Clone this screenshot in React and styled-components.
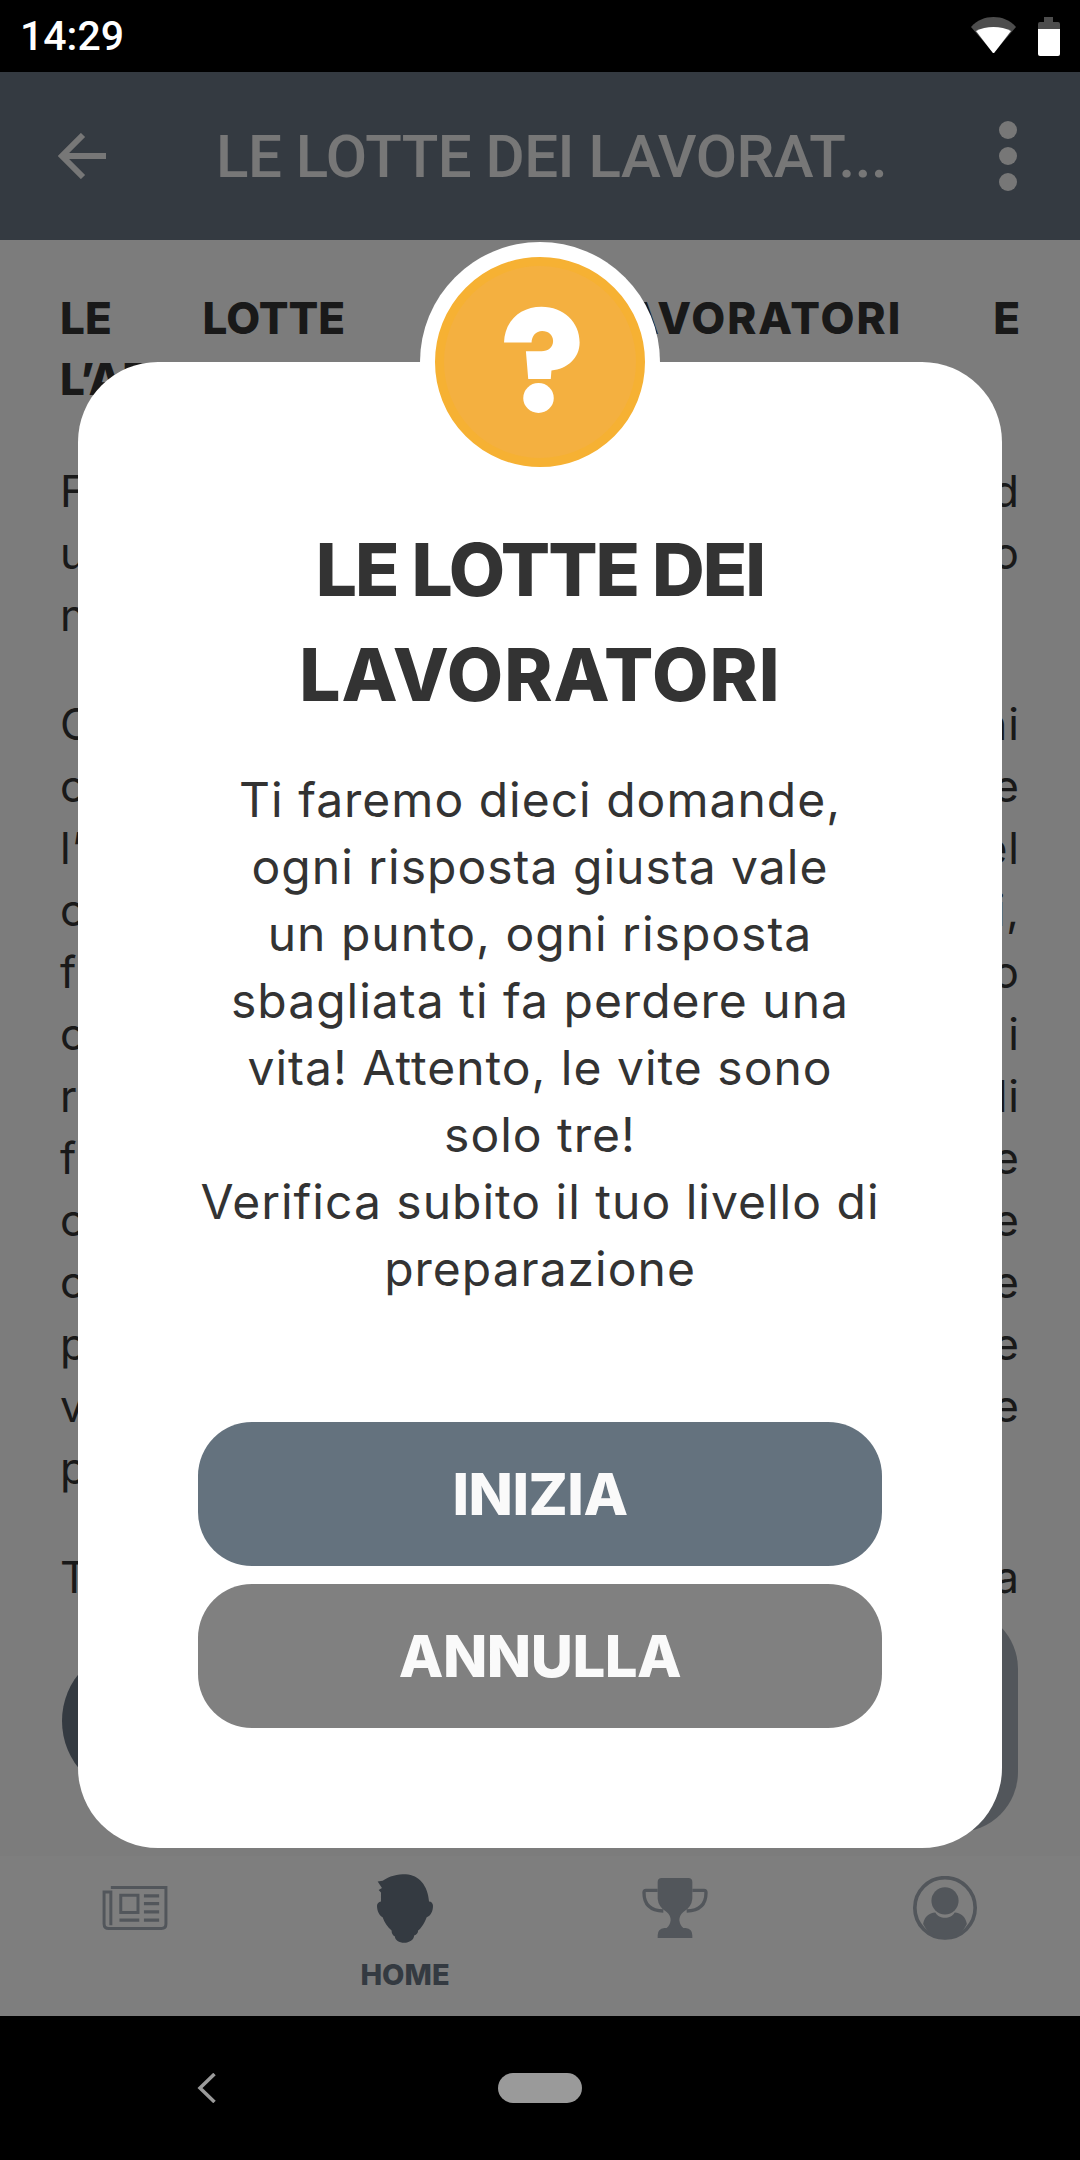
import React from 'react'
import styled, { createGlobalStyle } from 'styled-components'

const bodyLines = [
  ['F', 'd'], ['u', 'o'], ['n', ''],
]
const bodyLines2 = [
  ['C', 'ni'], ['c', 'e'], ['l’', 'el'], ['c', 'i,'], ['f', 'o'], ['c', 'i'], ['r', 'di'],
  ['f', 'e'], ['c', 'e'], ['c', 'e'], ['p', 'e'], ['v', 'e'], ['p', ''],
]

export default function App() {
  return (
    <Screen>
      <GlobalStyle />
      <StatusBar>
        <Clock>14:29</Clock>
        <StatusIcons>
          <svg width="45" height="36" viewBox="0 0 45 36">
            <path d="M0 10 C6 3 14 0 22.5 0 C31 0 39 3 45 10 L22.5 36 Z" fill="#4d4d4d" />
            <path d="M5 14 C10 11.500 16 10 22.500 10 C29 10 35 11.500 40 14 L23.500 35.500 Q22.500 36.500 21.500 35.500 Z" fill="#fff" />
          </svg>
          <svg width="22" height="39" viewBox="0 0 22 39">
            <path d="M6 0 H15 V5 H20 Q22 5 22 7 V12 H0 V7 Q0 5 2 5 H6 Z" fill="#4d4d4d" />
            <path d="M0 12 H22 V37 Q22 39 20 39 H2 Q0 39 0 37 Z" fill="#fff" />
          </svg>
        </StatusIcons>
      </StatusBar>

      <AppBar>
        <svg width="48" height="46" viewBox="0 0 48 46">
          <path d="M25 2 L4 23 L25 44 M4 23 H48" fill="none" stroke="#eee" strokeWidth="6" />
        </svg>
        <BarTitle>LE LOTTE DEI LAVORAT...</BarTitle>
        <Dots><i /><i /><i /></Dots>
      </AppBar>

      <Content>
        <Heading>LE LOTTE DEI <Wide>LAVORATORI</Wide> E L’AFFERMAZIONE</Heading>
        <Paragraph>
          {bodyLines.map((l, i) => <TextLine key={i}><span>{l[0]}</span><span>{l[1]}</span></TextLine>)}
        </Paragraph>
        <Paragraph>
          {bodyLines2.map((l, i) => <TextLine key={i}><span>{l[0]}</span><span>{l[1]}</span></TextLine>)}
        </Paragraph>
        <Paragraph $tight>
          <TextLine><span>T</span><span>a</span></TextLine>
        </Paragraph>
        <ActionRow>
          <RoundAction />
          <WideAction />
        </ActionRow>
      </Content>

      <TabBar>
        <Tab>
          <IconSlot>
            <svg width="66" height="44" viewBox="67 77 196 133">
              <path d="M92 81.500 H258.500 V192 Q258.500 205.500 245 205.500 H86 Q71.500 205.500 71.500 191 V95 H92 V196" fill="none" stroke="#a4acb6" strokeWidth="9" />
              <rect x="122" y="105" width="52" height="52" fill="none" stroke="#a4acb6" strokeWidth="9" />
              <path d="M192 107 H238 M192 130 H238 M192 155 H238 M192 180 H238 M118 180 H178" stroke="#a4acb6" strokeWidth="10" />
            </svg>
          </IconSlot>
        </Tab>
        <Tab>
          <IconSlot>
            <svg width="56" height="69" viewBox="888 40 169 207">
              <path d="M905 60 C925 45 950 40 975 40 C1015 42 1042 75 1045 122 C1052 122 1057 128 1057 135 C1057 152 1050 165 1038 170 C1030 190 1020 205 1012 210 C1012 218 1008 222 1000 225 C1000 238 985 247 970 247 C955 247 942 238 942 228 C935 225 932 218 932 210 C920 200 910 185 905 170 C895 165 888 150 888 135 C888 128 893 123 900 122 L900 95 L893 88 L903 82 L890 62 Z" fill="#687482" />
            </svg>
          </IconSlot>
          <TabLabel>HOME</TabLabel>
        </Tab>
        <Tab>
          <IconSlot>
            <svg width="66" height="60" viewBox="67 53 196 180">
              <path d="M125 53 H205 Q217 53 217 65 V115 Q215 140 190 155 Q178 165 178 180 Q180 195 190 203 H197 Q217 205 217 225 V233 H113 V225 Q113 205 133 203 H140 Q150 195 152 180 Q152 165 140 155 Q115 140 113 115 V65 Q113 53 125 53 Z" fill="#a4acb6" />
              <path d="M113 90 H78 Q72 90 72 97 Q72 150 130 152 M217 90 H252 Q258 90 258 97 Q258 150 200 152" fill="none" stroke="#a4acb6" strokeWidth="10" />
            </svg>
          </IconSlot>
        </Tab>
        <Tab>
          <IconSlot>
            <svg width="64" height="64" viewBox="878 47 192 193">
              <circle cx="974" cy="143" r="91" fill="none" stroke="#a4acb6" strokeWidth="11" />
              <circle cx="974" cy="122" r="41" fill="#a4acb6" />
              <path d="M908 192 C912 170 925 158 945 157 C955 178 993 178 1003 157 C1023 158 1036 170 1040 192 C1025 222 1000 238 974 238 C948 238 923 222 908 192 Z" fill="#a4acb6" />
            </svg>
          </IconSlot>
        </Tab>
      </TabBar>

      <SystemBar>
        <svg width="20" height="30" viewBox="0 0 20 30">
          <path d="M17.500 1 L3 15 L17.500 29" fill="none" stroke="#9a9a9a" strokeWidth="3.500" />
        </svg>
        <HomePill />
      </SystemBar>

      <Backdrop>
        <Modal>
          <Badge>
            <Disc>
              <svg width="192" height="192" viewBox="131 107 579 579">
                <path d="M312 338 C314 272 362 230 425 230 C492 230 540 276 540 338 C540 385 503 418 455 422 L453 448 H385 L378 364 H425 C445 364 460 352 460 333 C460 315 446 303 427 303 C408 303 396 318 395 338 Z" fill="#fff" />
                <ellipse cx="416" cy="505" rx="46" ry="45" fill="#fff" />
              </svg>
            </Disc>
          </Badge>
          <Title>
            <TitleLine $spacing={-2}>LE LOTTE DEI</TitleLine>
            <TitleLine $spacing={1}>LAVORATORI</TitleLine>
          </Title>
          <Message>
            Ti faremo dieci domande,<br />
            ogni risposta giusta vale<br />
            un punto, ogni risposta<br />
            sbagliata ti fa perdere una<br />
            vita! Attento, le vite sono<br />
            solo tre!<br />
            Verifica subito il tuo livello di<br />
            preparazione
          </Message>
          <Buttons>
            <Button $primary>INIZIA</Button>
            <Button>ANNULLA</Button>
          </Buttons>
        </Modal>
      </Backdrop>
    </Screen>
  )
}

const GlobalStyle = createGlobalStyle`
  html, body {
    margin: 0;
    padding: 0;
    background: #000;
  }
`;

const Screen = styled.div`
  position: relative;
  width: 1080px;
  height: 2160px;
  display: flex;
  flex-direction: column;
  overflow: hidden;
  font-family: "Inter", "Liberation Sans", sans-serif;
`;

const StatusBar = styled.div`
  height: 72px;
  background: #000;
  display: flex;
  justify-content: space-between;
  align-items: center;
  padding: 0 20px;
  flex-shrink: 0;
`;

const Clock = styled.div`
  font-family: "Roboto", sans-serif;
  font-weight: 500;
  font-size: 41px;
  color: #fff;
`;

const StatusIcons = styled.div`
  display: flex;
  align-items: flex-start;
  gap: 22px;
`;

const AppBar = styled.div`
  height: 168px;
  background: #687482;
  display: flex;
  align-items: center;
  padding: 0 63px 0 58px;
  flex-shrink: 0;
`;

const BarTitle = styled.div`
  flex: 1;
  margin-left: 110px;
  font-family: "Roboto", sans-serif;
  font-weight: 500;
  font-size: 60px;
  letter-spacing: -0.5px;
  color: #eee;
  white-space: nowrap;
`;

const Dots = styled.div`
  display: flex;
  flex-direction: column;
  gap: 8px;

  i {
    display: block;
    width: 18px;
    height: 18px;
    border-radius: 50%;
    background: #eee;
  }
`;

const Content = styled.div`
  flex: 1;
  min-height: 0;
  background: #f8f8f8;
  padding: 48px 60px 0;
  color: #333;
`;

const Heading = styled.div`
  font-weight: 800;
  font-size: 44px;
  line-height: 61px;
  text-align: justify;
  margin-bottom: 50px;
`;

const Wide = styled.span`
  letter-spacing: 2px;
`;

const Paragraph = styled.div`
  margin-bottom: ${p => (p.$tight ? '1px' : '47px')};
`;

const TextLine = styled.div`
  display: flex;
  justify-content: space-between;
  font-size: 44px;
  line-height: 62px;
  letter-spacing: 1px;
`;

const ActionRow = styled.div`
  display: flex;
  align-items: center;
  height: 223px;
  margin: 0 2px;
  gap: 20px;
`;

const RoundAction = styled.div`
  width: 400px;
  height: 150px;
  border-radius: 75px;
  background: #687482;
`;

const WideAction = styled.div`
  flex: 1;
  height: 223px;
  border-radius: 60px;
  background: #a4acb6;
`;

const TabBar = styled.div`
  height: 160px;
  padding-top: 16px;
  box-sizing: border-box;
  background: #fcfcfc;
  display: grid;
  grid-template-columns: repeat(4, 1fr);
  flex-shrink: 0;
`;

const Tab = styled.div`
  display: flex;
  flex-direction: column;
  align-items: center;
`;

const IconSlot = styled.div`
  height: 72px;
  display: flex;
  align-items: center;
  justify-content: center;
`;

const TabLabel = styled.div`
  margin-top: 16px;
  font-weight: 800;
  font-size: 29px;
  line-height: 30px;
  color: #687482;
`;

const SystemBar = styled.div`
  height: 144px;
  background: #000;
  display: flex;
  align-items: center;
  padding: 0 0 0 197px;
  gap: 281px;
  flex-shrink: 0;
`;

const HomePill = styled.div`
  width: 84px;
  height: 30px;
  border-radius: 15px;
  background: #9a9a9a;
`;

const Backdrop = styled.div`
  position: absolute;
  top: 72px;
  left: 0;
  right: 0;
  bottom: 144px;
  padding-top: 290px;
  box-sizing: border-box;
  background: rgba(0, 0, 0, 0.5);
  display: flex;
  justify-content: center;
  align-items: flex-start;
`;

const Modal = styled.div`
  position: relative;
  width: 924px;
  height: 1486px;
  box-sizing: border-box;
  padding-top: 155px;
  background: #fff;
  border-radius: 80px;
  display: flex;
  flex-direction: column;
  align-items: center;
  text-align: center;
  color: #333;
`;

const Badge = styled.div`
  position: absolute;
  top: -120px;
  left: 342px;
  width: 240px;
  height: 240px;
  box-sizing: border-box;
  padding: 15px;
  border-radius: 50%;
  background: #fff;
`;

const Disc = styled.div`
  width: 210px;
  height: 210px;
  box-sizing: border-box;
  border: 9px solid #f6b133;
  border-radius: 50%;
  background: #f4b040;

  svg {
    display: block;
  }
`;

const Title = styled.h1`
  margin: 0;
  font-weight: 800;
  font-size: 73px;
  line-height: 105px;
`;

const TitleLine = styled.div`
  letter-spacing: ${p => p.$spacing}px;
`;

const Message = styled.p`
  margin: 39px 0 0;
  font-weight: 400;
  font-size: 48px;
  line-height: 67px;
  letter-spacing: 1px;
`;

const Buttons = styled.div`
  margin-top: 120px;
  display: flex;
  flex-direction: column;
  gap: 18px;
`;

const Button = styled.div`
  width: 684px;
  height: 144px;
  border-radius: 54px;
  background: ${p => (p.$primary ? '#64727e' : '#808080')};
  color: #fafafa;
  font-weight: 800;
  font-size: 58px;
  letter-spacing: -0.5px;
  display: flex;
  align-items: center;
  justify-content: center;
`;
